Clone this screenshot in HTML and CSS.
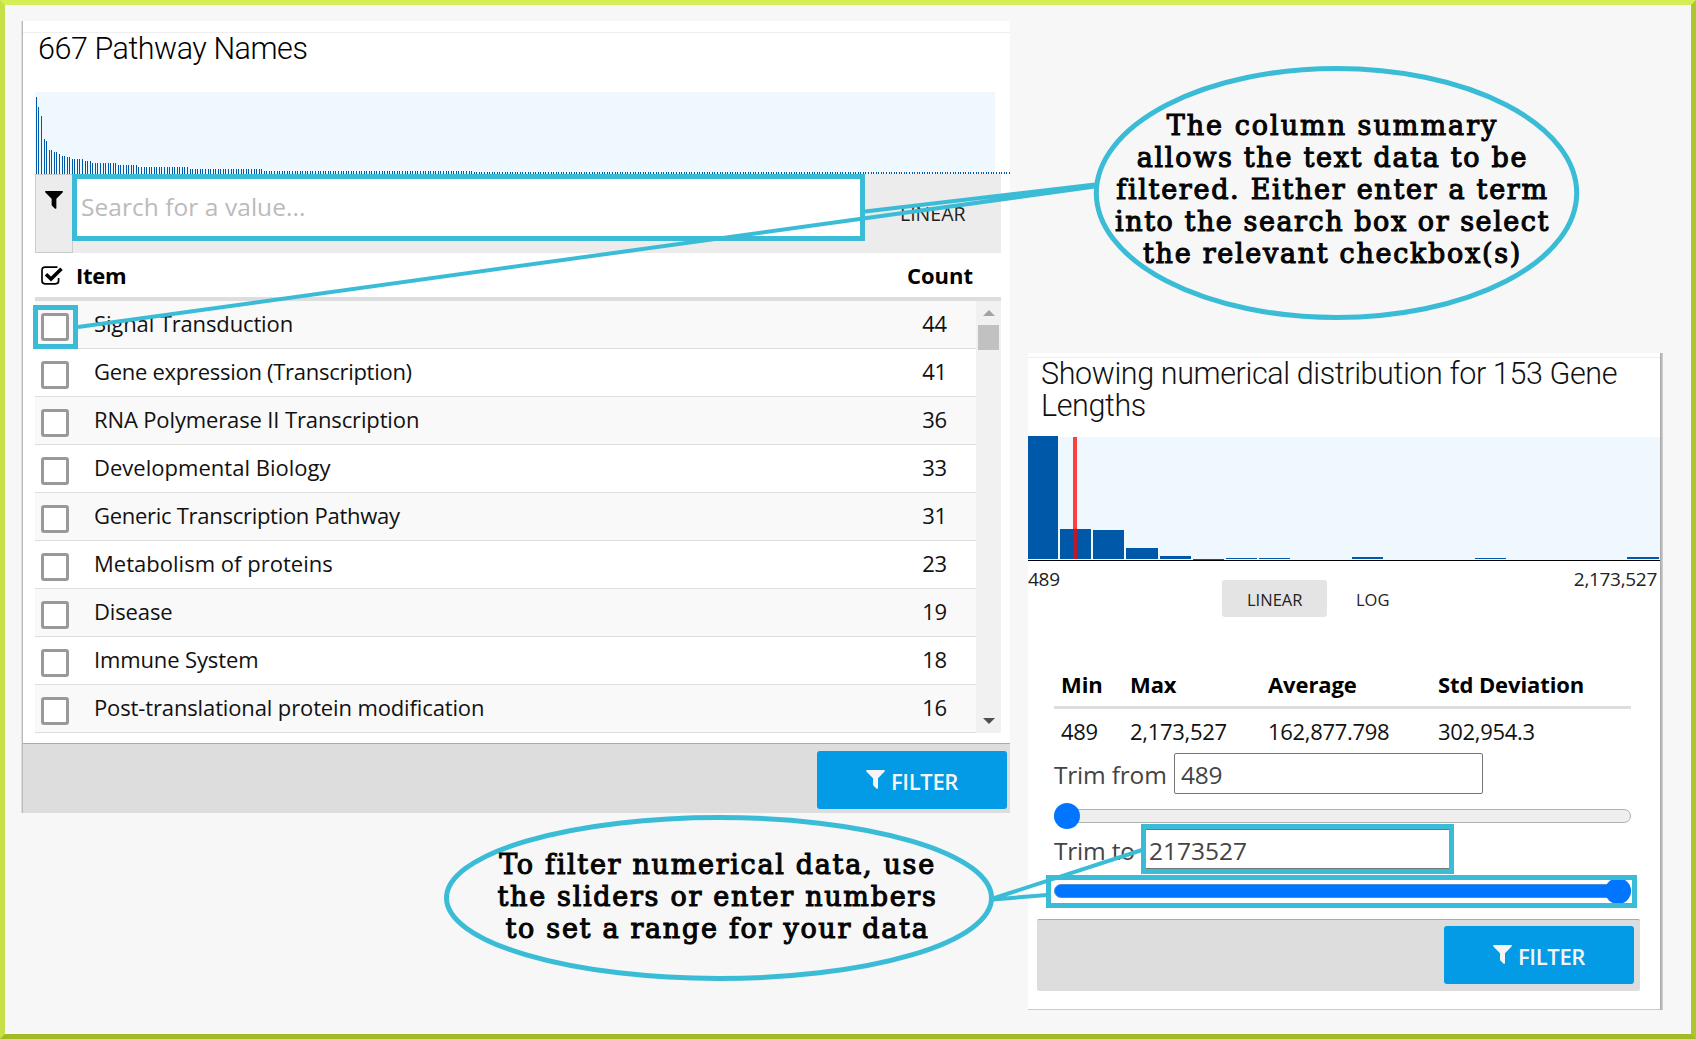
FILE: index.html
```html
<!DOCTYPE html>
<html lang="en">
<head>
<meta charset="utf-8">
<title>Column summary filters</title>
<link rel="stylesheet" href="styles.css">
</head>
<body>
<svg class="defs" width="0" height="0">
  <symbol id="funnel" viewBox="0 0 19 19"><path d="M0.7 0H18.3Q19.4 0.6 18.6 1.6L12 8.2V18.2Q11.6 19.2 10.6 18.7L7.4 15.6Q7 15.2 7 14.6V8.2L0.4 1.6Q-0.4 0.6 0.7 0Z" fill="currentColor"/></symbol>
</svg>
<main class="canvas">
  <section class="panel pathways">
    <div class="panel-top"></div>
    <h1 class="title">667 Pathway Names</h1>
    <svg class="histogram" width="975" height="82" viewBox="0 0 975 82">
      <rect width="960" height="82" fill="#eff7ff"/>
      <g class="thin-bars">
        <path d="M1 43.5h1" stroke-width="77"/>
        <path d="M3 48.5h1" stroke-width="67"/>
        <path d="M6 53h1" stroke-width="58"/>
        <path d="M9 64.5h1" stroke-width="35"/>
        <path d="M11 65.5h1" stroke-width="33"/>
        <path d="M13.8 70h4" stroke-width="24"/>
        <path d="M18.9 71h4" stroke-width="22"/>
        <path d="M24 72h2" stroke-width="20"/>
        <path d="M26.6 73h4" stroke-width="18"/>
        <path d="M31.7 73.5h4" stroke-width="17"/>
        <path d="M36.8 74.5h12" stroke-width="15"/>
        <path d="M49.6 75.5h7" stroke-width="13"/>
        <path d="M57.3 76.5h25" stroke-width="11"/>
        <path d="M82.9 77.5h20" stroke-width="9"/>
        <path d="M103.4 78.5h50.6" stroke-width="7"/>
        <path d="M154.6 79.5h73.6" stroke-width="5"/>
        <path d="M228.8 80.5h209.3" stroke-width="3"/>
        <path d="M438.8 81h536" stroke-width="2"/>
      </g>
    </svg>
    <div class="search-row">
      <div class="funnel-cell"><svg width="18" height="18"><use href="#funnel"/></svg></div>
      <div class="search-box">Search for a value...</div>
      <div class="scale-label">LINEAR</div>
    </div>
    <div class="items-head">
      <svg width="22" height="19" viewBox="0 0 22 19"><path d="M16.5 1.2H4Q1 1.2 1 4.2V14.8Q1 17.8 4 17.8H14.6Q17.6 17.8 17.6 14.8V12" fill="none" stroke="#000" stroke-width="1.7"/><path d="M5 8.3L10 13L20.5 2.8" fill="none" stroke="#000" stroke-width="3.6"/></svg>
      <b class="head-item">Item</b><b class="head-count">Count</b>
    </div>
    <div class="items">
      <div class="rows">
        <div class="row"><i class="box"></i><span>Signal Transduction</span><em>44</em></div>
        <div class="row tight"><i class="box"></i><span>Gene expression (Transcription)</span><em>41</em></div>
        <div class="row"><i class="box"></i><span>RNA Polymerase II Transcription</span><em>36</em></div>
        <div class="row loose"><i class="box"></i><span>Developmental Biology</span><em>33</em></div>
        <div class="row tight"><i class="box"></i><span>Generic Transcription Pathway</span><em>31</em></div>
        <div class="row loose"><i class="box"></i><span>Metabolism of proteins</span><em>23</em></div>
        <div class="row"><i class="box"></i><span>Disease</span><em>19</em></div>
        <div class="row"><i class="box"></i><span>Immune System</span><em>18</em></div>
        <div class="row"><i class="box"></i><span>Post-translational protein modification</span><em>16</em></div>
      </div>
      <div class="scrollbar"><i class="up"></i><i class="thumb"></i><i class="down"></i></div>
    </div>
    <div class="footer"><div class="filter"><svg width="19" height="19"><use href="#funnel"/></svg>FILTER</div></div>
  </section>

  <section class="panel lengths">
    <div class="panel-top"></div>
    <h1 class="title">Showing numerical distribution for 153 Gene<br>Lengths</h1>
    <svg class="distribution" width="632" height="125" viewBox="0 0 632 125" shape-rendering="crispEdges">
      <rect y="1" width="632" height="123" fill="#eff7ff"/>
      <g fill="#0058a8">
        <rect x="0" y="0" width="30" height="123"/>
        <rect x="32" y="93" width="31" height="30"/>
        <rect x="65" y="94" width="31" height="29"/>
        <rect x="98" y="112" width="32" height="11"/>
        <rect x="132" y="120" width="31" height="3"/>
        <rect x="165" y="123" width="31" height="1"/>
        <rect x="198" y="122" width="31" height="1"/>
        <rect x="231" y="122" width="31" height="1"/>
        <rect x="324" y="121" width="31" height="2"/>
        <rect x="447" y="122" width="31" height="1"/>
        <rect x="599" y="121" width="32" height="2"/>
      </g>
      <rect x="45" y="1" width="4" height="122" fill="#f00" fill-opacity=".75"/>
      <rect y="124" width="632" height="1" fill="#000"/>
    </svg>
    <div class="axis"><span>489</span><span>2,173,527</span></div>
    <div class="scales"><span class="scale on">LINEAR</span><span class="scale">LOG</span></div>
    <div class="stats">
      <b>Min</b><b>Max</b><b>Average</b><b>Std Deviation</b>
      <span>489</span><span>2,173,527</span><span>162,877.798</span><span>302,954.3</span>
    </div>
    <div class="trim from"><span>Trim from</span><div class="field">489</div></div>
    <div class="slider"><i></i></div>
    <div class="trim to"><span>Trim to</span><div class="field">2173527</div></div>
    <div class="slider full"><i></i></div>
    <div class="footer"><div class="filter"><svg width="19" height="19"><use href="#funnel"/></svg>FILTER</div></div>
  </section>

  <svg class="marks" width="1696" height="1039" viewBox="0 0 1696 1039">
    <g fill="none" stroke="#3bbcd6" stroke-width="5">
      <rect x="74.5" y="176.5" width="788" height="62"/>
      <rect x="35.5" y="307.5" width="40" height="39"/>
      <rect x="1143.5" y="826.5" width="308" height="45"/>
      <rect x="1048.5" y="877.5" width="586" height="28"/>
      <ellipse cx="1336.5" cy="193" rx="240.2" ry="124.5"/>
      <ellipse cx="719" cy="898" rx="272.5" ry="80.5"/>
      <g stroke-width="4">
        <path d="M865 211.5L1095 184.5M78 327L1095 186.5"/>
        <path d="M993 898.5L1142 850M993 899.5L1047 895"/>
      </g>
    </g>
  </svg>
  <p class="callout first"><span>The column summary</span><span>allows the text data to be</span><span>filtered. Either enter a term</span><span>into the search box or select</span><span>the relevant checkbox(s)</span></p>
  <p class="callout second"><span>To filter numerical data, use</span><span>the sliders or enter numbers</span><span>to set a range for your data</span></p>
</main>
</body>
</html>
```
FILE: styles.css
```css
* { box-sizing: border-box; }
body { margin: 0; background: #f7f7f7; font-family: "Open Sans", "Noto Sans", sans-serif; color: #111; }
.defs { display: block; }
.canvas {
  position: relative; width: 1696px; height: 1039px; overflow: hidden;
  display: flex; align-items: flex-start; padding: 16px 0 0 18px;
  border: 5px solid; border-color: #d4ef55 #adc82f #a2bb22 #c6e147;
}
.panel { background: #fff; flex: none; }
.panel-top { border-bottom: 1px solid #eee; }
.title { margin: 0; font: 300 30.5px/32px Roboto, sans-serif; letter-spacing: -.39px; color: #000; }

/* Pathway names */
.pathways { width: 987px; height: 792px; display: flex; flex-direction: column; box-shadow: -1px 0 0 #bbb, -2px 0 0 #ddd; }
.pathways .panel-top { height: 12px; }
.pathways .title { height: 59px; padding-left: 15px; letter-spacing: -.45px; }
.histogram { margin-left: 12px; flex: none; }
.thin-bars { stroke: #0058a8; stroke-dasharray: 1 1.56; shape-rendering: crispEdges; }
.search-row { margin-left: 12px; width: 966px; height: 79px; background: #ececec; display: flex; }
.funnel-cell { width: 38px; border: 1px solid #ccc; padding: 16px 0 0 9px; color: #000; }
.search-box { width: 791px; height: 66px; background: #fff; padding-left: 8px; font-size: 24.5px; line-height: 65px; color: #bbb; letter-spacing: .05px; }
.scale-label { padding-left: 36px; font-size: 19.5px; line-height: 80px; color: #222; }
.items-head { margin-left: 12px; width: 966px; height: 48px; border-bottom: 4px solid #ddd; display: flex; align-items: center; padding: 0 28px 0 6px; font-size: 22px; color: #000; }
.head-item { margin-left: 13px; letter-spacing: -.3px; }
.head-count { margin-left: auto; }
.items { margin-left: 12px; width: 966px; height: 432px; display: flex; }
.rows { width: 941px; }
.row { height: 48px; border-bottom: 1px solid #ddd; display: flex; align-items: center; padding: 0 29px 0 6px; font-size: 22px; line-height: 44px; }
.row:nth-child(odd) { background: #f9f9f9; }
.row span { margin: -3px 0 0 25px; letter-spacing: -.13px; }
.row.tight span { letter-spacing: -.28px; }
.row.loose span { letter-spacing: .02px; }
.row em { font-style: normal; margin: -3px 0 0 auto; letter-spacing: -.2px; }
.box { width: 28px; height: 28px; margin-top: 5px; border: 3px solid #999; border-radius: 3px; background: #fff; }
.scrollbar { width: 25px; background: #f1f1f1; display: flex; flex-direction: column; align-items: center; padding: 9px 2px; }
.up { border: 6px solid transparent; border-top: 0; border-bottom-color: #a3a3a3; }
.thumb { width: 21px; height: 25px; margin-top: 9px; background: #c1c1c1; }
.down { margin-top: auto; border: 6px solid transparent; border-bottom: 0; border-top-color: #505050; }
.footer { background: #ddd; border-top: 1px solid #aaa; display: flex; justify-content: flex-end; }
.pathways .footer { height: 70px; margin-top: auto; padding: 7px 3px 0 0; }
.filter { width: 190px; height: 58px; border-radius: 3px; background: #039be5; color: #f5f5f5; font-size: 22px; font-weight: 600; line-height: 60px; letter-spacing: -.35px; display: flex; padding-left: 49px; }
.filter svg { margin: 19px 6px 0 0; }

/* Gene lengths */
.lengths { width: 632px; height: 657px; margin: 332px 0 0 18px; display: flex; flex-direction: column; box-shadow: 1px 0 0 #aaa, 2px 0 0 #bbb, 3px 0 0 #ccc; border-bottom: 1px solid #ccc; }
.lengths .panel-top { height: 5px; flex: none; }
.lengths .title { height: 78px; flex: none; padding-left: 13px; color: #111; }
.distribution { flex: none; display: block; }
.axis { display: flex; justify-content: space-between; padding-right: 3px; height: 19px; font-size: 19px; line-height: 37px; color: #222; letter-spacing: -.3px; }
.scales { display: flex; height: 37px; padding-left: 194px; }
.scale { font-size: 16.5px; line-height: 39px; padding: 0 25px; color: #222; }
.scale.on { width: 105px; background: #e4e4e4; border-radius: 3px; margin-right: 4px; }
.stats { display: grid; grid-template-columns: 69px 138px 170px 1fr; grid-template-rows: 51px 44px; margin: 41px 29px 0 26px; font-size: 22px; }
.stats b { border-bottom: 3px solid #ddd; padding-left: 7px; line-height: 52px; color: #000; white-space: nowrap; letter-spacing: -.1px; }
.stats span { padding-left: 7px; line-height: 45px; letter-spacing: -.3px; }
.trim { display: flex; margin-left: 26px; font-size: 24.5px; line-height: 43px; letter-spacing: -.2px; color: #444; }
.trim.from { height: 41px; }
.trim.from > span { width: 111px; white-space: nowrap; }
.field { border: 1px solid #767676; border-radius: 2px; width: 309px; height: 41px; padding-left: 6px; line-height: 41px; margin-left: 9px; }
.slider { height: 14px; margin: 15px 29px 0 26px; border: 1px solid #b2b2b2; border-radius: 7px; background: #efefef; flex: none; display: flex; align-items: center; }
.slider i { width: 26px; height: 26px; flex: none; margin: -7px -1px; border-radius: 50%; background: #0075ff; }
.trim.to { margin-top: 6px; height: 40px; }
.trim.to > span { width: 81px; white-space: nowrap; }
.trim.to .field { margin-left: 7px; height: 40px; letter-spacing: 0; }
.slider.full { background: #0075ff; justify-content: flex-end; border-color: #4a91dd; }
.lengths .footer { margin: 21px 20px 0 9px; height: 72px; padding: 6px 6px 0 0; border-radius: 2px; flex: none; }

/* Annotations laid over the panels */
.marks { position: absolute; left: -5px; top: -5px; }
.callout { position: absolute; margin: 0; display: flex; flex-direction: column; align-items: center; font: 27px/32px "DejaVu Serif", serif; -webkit-text-stroke: 1.1px #050505; letter-spacing: 1.7px; color: #050505; white-space: nowrap; }
.first { left: 1090px; width: 475px; top: 105px; }
.first span:first-child { letter-spacing: 2px; }
.first span:nth-child(4) { letter-spacing: 1.55px; }
.second { left: 440px; width: 545px; top: 844px; }
```
